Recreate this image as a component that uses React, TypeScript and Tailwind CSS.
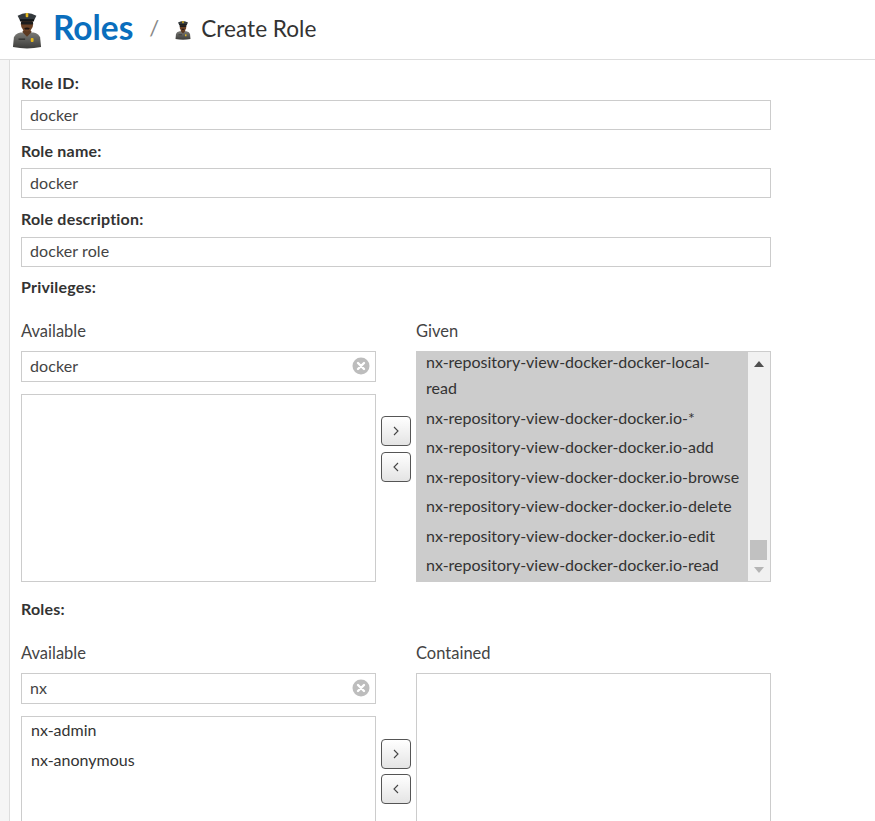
function Officer({ w, h }: { w: number; h: number }) {
  return (
    <svg width={w} height={h} viewBox="0 0 32 40" preserveAspectRatio="none" className="shrink-0">
      <defs>
        <linearGradient id="body" x1="0" y1="0" x2="0" y2="1">
          <stop offset="0" stopColor="#7a7a76" />
          <stop offset="1" stopColor="#3c3c3a" />
        </linearGradient>
      </defs>
      <path d="M1 38 L2 28 Q3 24 9 22.5 L23 22.5 Q29 24 30 28 L31 38 Q16 41 1 38Z" fill="url(#body)" />
      <path d="M11 22 L16 27 L21 22 L19 19 L13 19Z" fill="#5c3a22" />
      <ellipse cx="16" cy="14" rx="6.5" ry="7.5" fill="#6b4226" />
      <rect x="9.5" y="11" width="13" height="3.2" rx="1.4" fill="#1d1d1d" />
      <path d="M13 18 Q16 16.5 19 18 L18 19.5 L14 19.5Z" fill="#1f1410" />
      <path d="M6 5 Q16 -1 26 5 L23.5 10 L8.5 10Z" fill="#34393d" />
      <rect x="8.5" y="8.5" width="15" height="2.5" fill="#15181a" />
      <rect x="14.6" y="2" width="2.8" height="4.5" rx="1" fill="#e4b81e" />
      <rect x="20" y="28.5" width="3" height="4" rx="1" fill="#e4b81e" />
      <rect x="7" y="29" width="7" height="1.3" fill="#2d2d2b" />
    </svg>
  );
}

function Clear() {
  return (
    <svg width="18" height="18" viewBox="0 0 18 18" className="absolute right-[5px] top-[5px]">
      <circle cx="9" cy="9" r="8.5" fill="#bdbdbd" />
      <path d="M6 6 L12 12 M12 6 L6 12" stroke="#fff" strokeWidth="2.4" strokeLinecap="round" />
    </svg>
  );
}

function Field({ label, value, mt, gap, lead }: { label: string; value: string; mt: string; gap: string; lead: string }) {
  return (
    <div className={mt}>
      <div className="font-bold text-[16px] tracking-[0.2px] leading-[20px] text-[#333]">{label}</div>
      <div className={`${gap} ${lead} h-[30px] border border-[#cccccc] px-[8px] text-[16px] tracking-[0.1px] text-[#444]`}>{value}</div>
    </div>
  );
}

function Filter({ value }: { value: string }) {
  return (
    <div className="relative h-[31px] w-[355px] border border-[#cccccc] px-[8px] text-[16px] tracking-[0.1px] leading-[28px] text-[#444]">
      {value}
      <Clear />
    </div>
  );
}

function MoveButton({ dir }: { dir: "l" | "r" }) {
  return (
    <div className="flex h-[30px] w-[30px] items-center justify-center rounded-[4px] border border-[#555] bg-gradient-to-b from-white to-[#e4e4e4]">
      <svg width="8" height="10" viewBox="0 0 8 10">
        <path d={dir === "r" ? "M2 1 L6 5 L2 9" : "M6 1 L2 5 L6 9"} fill="none" stroke="#444" strokeWidth="1.1" />
      </svg>
    </div>
  );
}

const given = [
  "nx-repository-view-docker-docker.io-*",
  "nx-repository-view-docker-docker.io-add",
  "nx-repository-view-docker-docker.io-browse",
  "nx-repository-view-docker-docker.io-delete",
  "nx-repository-view-docker-docker.io-edit",
  "nx-repository-view-docker-docker.io-read",
];

function GivenList() {
  return (
    <div className="flex h-[231px] w-[355px] overflow-hidden border border-[#cccccc]">
      <div className="w-[331px] bg-[#cccccc] pl-[9px] pr-[2px] text-[16px] text-[#333]">
        <div className="-mt-[4px] leading-[27px] whitespace-nowrap">nx-repository-view-docker-docker-local-</div>
        <div className="mb-[2.5px] leading-[25px]">read</div>
        {given.map((g) => (
          <div key={g} className="h-[29.5px] leading-[29.5px] whitespace-nowrap">{g}</div>
        ))}
      </div>
      <div className="relative w-[22px] bg-[#f1f1f1]">
        <svg width="10" height="6" viewBox="0 0 10 6" className="absolute left-[6px] top-[9px]">
          <path d="M0 6 L5 0 L10 6Z" fill="#505050" />
        </svg>
        <div className="absolute left-[2px] top-[188px] h-[20px] w-[17px] bg-[#c1c1c1]" />
        <svg width="10" height="6" viewBox="0 0 10 6" className="absolute left-[6px] top-[215px]">
          <path d="M0 0 L5 6 L10 0Z" fill="#b5b5b5" />
        </svg>
      </div>
    </div>
  );
}

export default function App() {
  return (
    <div className="h-[821px] w-[875px] overflow-hidden bg-white font-['Lato','Open_Sans',sans-serif]">
      <header className="flex h-[60px] items-center border-b border-[#dddddd] pl-[12px]">
        <Officer w={30} h={38} />
        <span className="ml-[11px] relative -top-[2px] text-[33.4px] font-bold leading-none text-[#0a6ebd]">Roles</span>
        <span className="ml-[16px] relative -top-[2px] text-[22px] text-[#888]">/</span>
        <span className="ml-[16px]"><Officer w={16} h={20} /></span>
        <span className="ml-[10px] relative -top-[1px] text-[22.6px] text-[#333]">Create Role</span>
      </header>
      <div className="flex h-[761px]">
        <div className="w-[10px] shrink-0 border-r border-[#dddddd] bg-[#f5f5f5]" />
        <main className="w-[750px] shrink-0 pl-[11px] box-content">
          <Field label="Role ID:" value="docker" mt="mt-[13px]" gap="mt-[7px]" lead="leading-[27px]" />
          <Field label="Role name:" value="docker" mt="mt-[11px]" gap="mt-[7px]" lead="leading-[27px]" />
          <Field label="Role description:" value="docker role" mt="mt-[11px]" gap="mt-[8px]" lead="leading-[26px]" />
          <div className="mt-[10px] font-bold text-[16px] tracking-[0.2px] leading-[20px] text-[#333]">Privileges:</div>

          <div className="mt-[24px] flex">
            <div className="text-[16.5px] leading-[20px] text-[#444] w-[395px]">Available</div>
            <div className="text-[16.5px] leading-[20px] text-[#444]">Given</div>
          </div>
          <div className="mt-[10px] flex">
            <div className="w-[355px]">
              <Filter value="docker" />
              <div className="mt-[12px] h-[188px] border border-[#cccccc]" />
            </div>
            <div className="ml-[5px] flex w-[30px] flex-col gap-[6px] pt-[65px]">
              <MoveButton dir="r" />
              <MoveButton dir="l" />
            </div>
            <div className="ml-[5px]"><GivenList /></div>
          </div>

          <div className="mt-[17px] font-bold text-[16px] tracking-[0.2px] leading-[20px] text-[#333]">Roles:</div>
          <div className="mt-[24px] flex">
            <div className="text-[16.5px] leading-[20px] text-[#444] w-[395px]">Available</div>
            <div className="text-[16.5px] leading-[20px] text-[#444]">Contained</div>
          </div>
          <div className="mt-[10px] flex">
            <div className="w-[355px]">
              <Filter value="nx" />
              <div className="mt-[12px] h-[188px] border border-[#cccccc] pl-[9px] text-[16px] text-[#333]">
                <div className="h-[30px] leading-[26px]">nx-admin</div>
                <div className="h-[30px] leading-[26px]">nx-anonymous</div>
              </div>
            </div>
            <div className="ml-[5px] flex w-[30px] flex-col gap-[5px] pt-[66px]">
              <MoveButton dir="r" />
              <MoveButton dir="l" />
            </div>
            <div className="ml-[5px] h-[231px] w-[355px] border border-[#cccccc]" />
          </div>
        </main>
      </div>
    </div>
  );
}
